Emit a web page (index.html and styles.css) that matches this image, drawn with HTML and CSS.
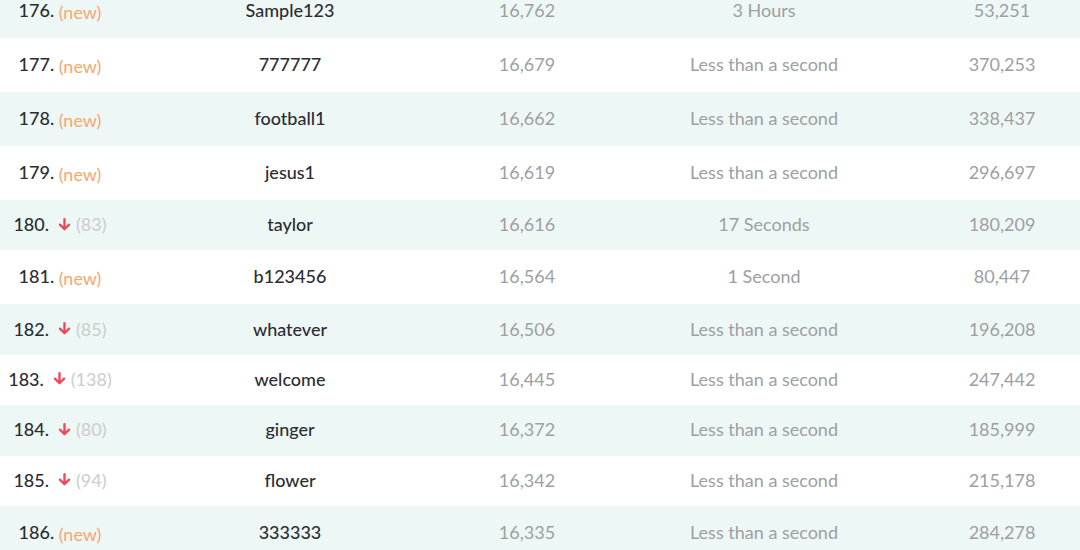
FILE: index.html
```html
<!DOCTYPE html>
<html>
<head>
<meta charset="utf-8">
<link rel="stylesheet" href="styles.css">
</head>
<body>
<div class="table">
  <div class="row new alt"><div class="rank">176. <span class="tag">(new)</span></div><div class="user">Sample123</div><div class="num">16,762</div><div class="time">3 Hours</div><div class="num">53,251</div></div>
  <div class="row new"><div class="rank">177. <span class="tag">(new)</span></div><div class="user">777777</div><div class="num">16,679</div><div class="time">Less than a second</div><div class="num">370,253</div></div>
  <div class="row new alt"><div class="rank">178. <span class="tag">(new)</span></div><div class="user">football1</div><div class="num">16,662</div><div class="time">Less than a second</div><div class="num">338,437</div></div>
  <div class="row new"><div class="rank">179. <span class="tag">(new)</span></div><div class="user">jesus1</div><div class="num">16,619</div><div class="time">Less than a second</div><div class="num">296,697</div></div>
  <div class="row down alt"><div class="rank">180.<svg class="arrow" viewBox="0 0 12 12"><path d="M6 1.2v9M1.8 6.2l4.2 4.2 4.2-4.2"/></svg><span class="prev">(83)</span></div><div class="user">taylor</div><div class="num">16,616</div><div class="time">17 Seconds</div><div class="num">180,209</div></div>
  <div class="row new"><div class="rank">181. <span class="tag">(new)</span></div><div class="user">b123456</div><div class="num">16,564</div><div class="time">1 Second</div><div class="num">80,447</div></div>
  <div class="row down alt"><div class="rank">182.<svg class="arrow" viewBox="0 0 12 12"><path d="M6 1.2v9M1.8 6.2l4.2 4.2 4.2-4.2"/></svg><span class="prev">(85)</span></div><div class="user">whatever</div><div class="num">16,506</div><div class="time">Less than a second</div><div class="num">196,208</div></div>
  <div class="row down"><div class="rank">183.<svg class="arrow" viewBox="0 0 12 12"><path d="M6 1.2v9M1.8 6.2l4.2 4.2 4.2-4.2"/></svg><span class="prev">(138)</span></div><div class="user">welcome</div><div class="num">16,445</div><div class="time">Less than a second</div><div class="num">247,442</div></div>
  <div class="row down alt"><div class="rank">184.<svg class="arrow" viewBox="0 0 12 12"><path d="M6 1.2v9M1.8 6.2l4.2 4.2 4.2-4.2"/></svg><span class="prev">(80)</span></div><div class="user">ginger</div><div class="num">16,372</div><div class="time">Less than a second</div><div class="num">185,999</div></div>
  <div class="row down"><div class="rank">185.<svg class="arrow" viewBox="0 0 12 12"><path d="M6 1.2v9M1.8 6.2l4.2 4.2 4.2-4.2"/></svg><span class="prev">(94)</span></div><div class="user">flower</div><div class="num">16,342</div><div class="time">Less than a second</div><div class="num">215,178</div></div>
  <div class="row new alt"><div class="rank">186. <span class="tag">(new)</span></div><div class="user">333333</div><div class="num">16,335</div><div class="time">Less than a second</div><div class="num">284,278</div></div>
</div>
</body>
</html>
```
FILE: styles.css
```css
html, body {
  margin: 0;
  padding: 0;
  background: #ffffff;
  overflow: hidden;
}
body {
  width: 1080px;
  height: 550px;
  font-family: "Lato", "Noto Sans", sans-serif;
  font-size: 18px;
}
.table {
  margin-top: -16px;
}
.row {
  display: grid;
  grid-template-columns: 120px 340px 134px 340px 136px 10px;
  align-items: center;
  justify-items: center;
  box-sizing: border-box;
  padding-bottom: 2px;
  background: #ffffff;
}
.row.alt {
  background: #edf7f6;
}
.row.new {
  height: 54px;
}
.row.down {
  height: 50.4px;
}
.rank {
  display: flex;
  align-items: center;
  color: #2b2d33;
  font-weight: 500;
  white-space: pre;
}
.tag {
  color: #f9a66c;
  font-weight: 400;
  position: relative;
  top: 2px;
}
.arrow {
  width: 13px;
  height: 13px;
  margin: 0 5px 0 9px;
  fill: none;
  stroke: #ef4a5c;
  stroke-width: 2.2;
  stroke-linecap: round;
  stroke-linejoin: round;
}
.prev {
  color: #cfcfcf;
}
.user {
  color: #2b2d33;
  font-weight: 500;
}
.num, .time {
  color: #9d9fa3;
  font-weight: 400;
}
```
